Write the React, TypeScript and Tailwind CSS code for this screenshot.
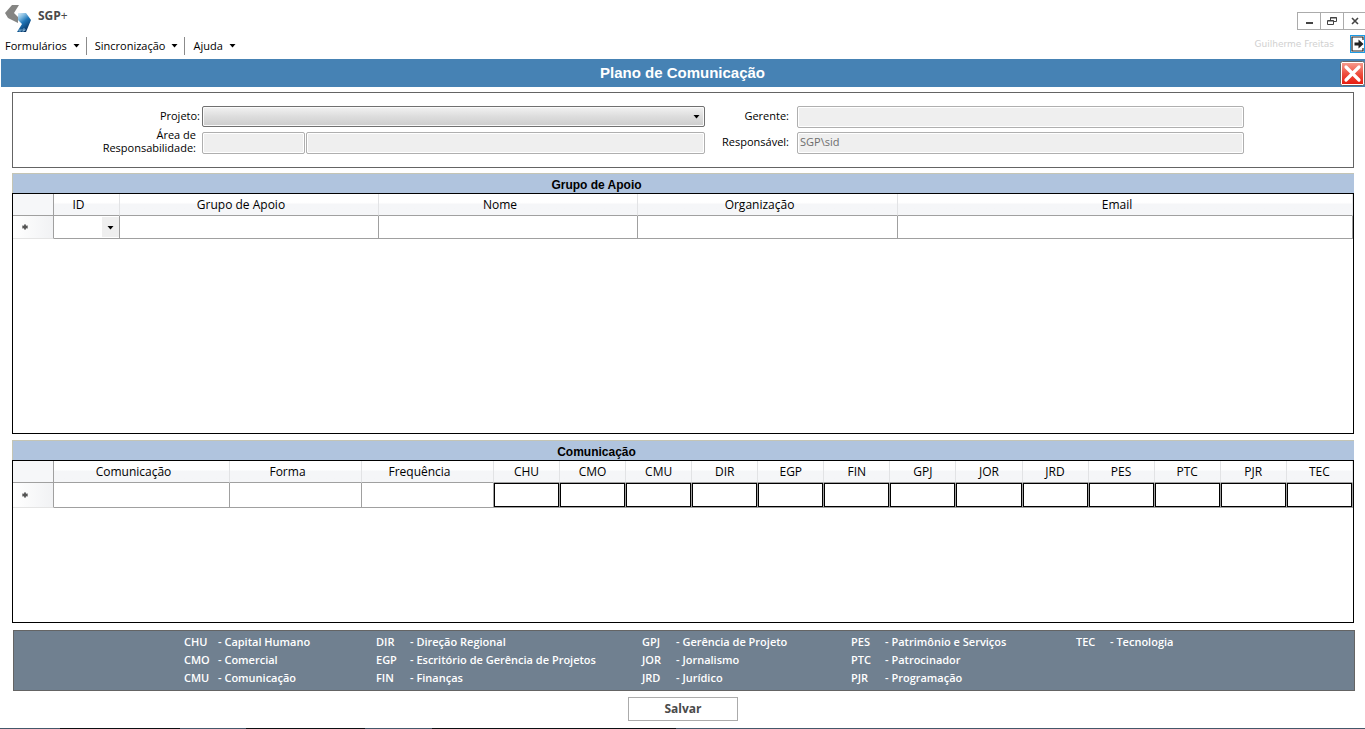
import { ReactNode } from 'react'
import { clsx } from 'clsx'

const menus = ['Formulários', 'Sincronização', 'Ajuda']

const supportColumns = [
  { label: 'Grupo de Apoio', width: 'w-[259px]' },
  { label: 'Nome', width: 'w-[259px]' },
  { label: 'Organização', width: 'w-[260px]' },
  { label: 'Email', width: '' }
]

const textColumns = [
  { label: 'Comunicação', width: 'w-44' },
  { label: 'Forma', width: 'w-33' },
  { label: 'Frequência', width: 'w-33' }
]

const areas = ['CHU', 'CMO', 'CMU', 'DIR', 'EGP', 'FIN', 'GPJ', 'JOR', 'JRD', 'PES', 'PTC', 'PJR', 'TEC']

const legend = [
  [['CHU', 'Capital Humano'], ['CMO', 'Comercial'], ['CMU', 'Comunicação']],
  [['DIR', 'Direção Regional'], ['EGP', 'Escritório de Gerência de Projetos'], ['FIN', 'Finanças']],
  [['GPJ', 'Gerência de Projeto'], ['JOR', 'Jornalismo'], ['JRD', 'Jurídico']],
  [['PES', 'Patrimônio e Serviços'], ['PTC', 'Patrocinador'], ['PJR', 'Programação']],
  [['TEC', 'Tecnologia']]
]

const fieldClass =
  'h-[22px] w-full min-w-0 rounded-[2px] border border-[#afafaf] bg-[#efefef] px-[2px] pb-[3px] text-[11px] text-[#6d6d6d] shadow-[inset_0_0_0_1px_#fff]'

function Caret({ className }: { className?: string }) {
  return (
    <svg viewBox="0 0 7 4" className={clsx('h-1 w-[7px]', className)} aria-hidden="true">
      <path d="M0.5 0h6L3.5 3.5z" fill="#000" />
    </svg>
  )
}

function Logo() {
  return (
    <svg viewBox="0 0 28 30" className="h-[30px] w-7" aria-hidden="true">
      <defs>
        <linearGradient id="logo-blue" x1="0" y1="0" x2="0.6" y2="1">
          <stop offset="0" stopColor="#e6f2fa" />
          <stop offset="0.3" stopColor="#7fb9df" />
          <stop offset="0.55" stopColor="#1f76b8" />
          <stop offset="1" stopColor="#06305f" />
        </linearGradient>
      </defs>
      <path d="M7 1h7L9 9l4 4v6L3 14 0 9z" fill="#858583" />
      <path d="M13 9h8l5 7-5 12h-9l5-8-4-4z" fill="url(#logo-blue)" />
      <path d="M14 25v2h2v-2M18 28v-3h2v1.5h-2" fill="none" stroke="#9cc8e6" strokeWidth="0.7" />
    </svg>
  )
}

function WindowButton({ label, children }: { label: string; children: ReactNode }) {
  return (
    <button
      type="button"
      aria-label={label}
      className="-ml-px flex h-[18px] w-6 items-center justify-center border border-[#ababab] bg-white"
    >
      <svg viewBox="0 0 10 9" className="h-[9px] w-[10px]" fill="none" stroke="#444" aria-hidden="true">
        {children}
      </svg>
    </button>
  )
}

function Header() {
  return (
    <header className="flex h-[59px] shrink-0 justify-between overflow-hidden">
      <div>
        <div className="flex h-9 gap-[5px] pl-[5px] pt-1">
          <Logo />
          <h1 className="pt-1 text-[12px] font-bold leading-4 text-[#4a4a4a]">
            SGP<span className="font-normal">+</span>
          </h1>
        </div>
        <nav className="flex h-5 items-center text-[11px]">
          {menus.map((menu, i) => (
            <button
              key={menu}
              type="button"
              className={clsx(
                'flex h-[18px] items-center gap-[6px] pr-[6px]',
                i === 0 ? 'pl-[5px]' : 'border-l border-[#8b8b8b] pl-2'
              )}
            >
              {menu}
              <Caret />
            </button>
          ))}
        </nav>
      </div>

      <div className="flex flex-col items-end pt-3">
        <div className="-mr-[2px] flex">
          <WindowButton label="Minimizar">
            <path d="M2 6h7" strokeWidth="2" />
          </WindowButton>
          <WindowButton label="Restaurar">
            <path d="M3.5 3V0.5h6v4H7M3 1h7M1 4h6" />
            <path d="M0.5 3.5h6v4h-6z" />
          </WindowButton>
          <WindowButton label="Fechar janela">
            <path d="M2 1l6 6M8 1L2 7" strokeWidth="1.6" />
          </WindowButton>
        </div>
        <div className="flex items-start gap-4 pt-[5px]">
          <span className="pt-[2px] font-['DejaVu_Sans'] text-[9px] leading-[14px] text-[#d0d0d0]">Guilherme Freitas</span>
          <button type="button" aria-label="Sair">
            <svg viewBox="0 0 15 18" className="h-[18px] w-[15px]" aria-hidden="true">
              <rect x="0.5" y="0.5" width="14" height="17" fill="#fff" stroke="#1c9be6" />
              <path d="M13 5V2H2v14h11v-3" fill="none" stroke="#222" strokeWidth="1.2" />
              <path d="M4.500 7.500h4V4.500l5 4.500-5 4.500v-3h-4z" fill="#222" />
            </svg>
          </button>
        </div>
      </div>
    </header>
  )
}

function TitleBar() {
  return (
    <div className="ml-px flex h-7 shrink-0 items-center bg-[#4682b4]">
      <h2 className="flex-1 pl-6 text-center font-['Liberation_Sans'] text-[15px] font-bold text-white">
        Plano de Comunicação
      </h2>
      <button type="button" aria-label="Fechar">
        <svg viewBox="0 0 25 25" className="h-[25px] w-[25px]" aria-hidden="true">
          <defs>
            <linearGradient id="close-red" x1="0" y1="0" x2="0" y2="1">
              <stop offset="0" stopColor="#f59a8c" />
              <stop offset="0.5" stopColor="#ee5040" />
              <stop offset="1" stopColor="#e81c10" />
            </linearGradient>
          </defs>
          <rect x="0.5" y="0.5" width="24" height="24" rx="2" fill="#fff" stroke="#666" />
          <rect x="2" y="2" width="21" height="21" fill="url(#close-red)" />
          <path d="M6 6l13 13M19 6L6 19" stroke="#fff" strokeWidth="3.2" strokeLinecap="round" />
        </svg>
      </button>
    </div>
  )
}

function ProjectForm() {
  return (
    <form className="grid shrink-0 grid-cols-[189px_503fr_92px_447fr_109px] gap-y-1 border border-[#646464] py-[13px] text-[11px]">
      <label htmlFor="projeto" className="self-center pb-[2px] pr-[2px] text-right">Projeto:</label>
      <div className="relative h-[21px]">
        <select
          id="projeto"
          className="h-full w-full appearance-none rounded-[2px] border border-[#707070] bg-linear-to-b from-[#f2f2f2] from-0% via-[#dddddd] via-50% to-[#cdcdcd] shadow-[inset_0_0_0_1px_#fafafa]"
        >
          <option value=""></option>
        </select>
        <Caret className="pointer-events-none absolute right-[5px] top-[9px]" />
      </div>
      <label htmlFor="gerente" className="self-center pb-[2px] pr-2 text-right">Gerente:</label>
      <input id="gerente" disabled className={fieldClass} />
      <span />

      <label htmlFor="area" className="-mt-1 pr-[6px] text-right leading-[13px]">
        Área de<br />Responsabilidade:
      </label>
      <div className="flex gap-px">
        <div className="w-[103px] shrink-0">
          <input id="area" disabled className={fieldClass} />
        </div>
        <input aria-label="Descrição da área" disabled className={fieldClass} />
      </div>
      <label htmlFor="responsavel" className="mt-[2px] pr-2 text-right">Responsável:</label>
      <input id="responsavel" disabled defaultValue="SGP\sid" className={fieldClass} />
    </form>
  )
}

interface PanelProps {
  title: string
  className: string
  children: ReactNode
}

function Panel({ title, className, children }: PanelProps) {
  return (
    <section className={clsx('flex flex-col', className)}>
      <h3 className="h-5 border-l border-t border-[#c5c5b4] bg-[#b0c4de] pr-[174px] pt-[2px] text-center font-['Liberation_Sans'] text-[12px] font-bold leading-[18px]">
        {title}
      </h3>
      <div className="flex-1 border border-black">{children}</div>
    </section>
  )
}

function HeaderCell({ children, className }: { children?: ReactNode; className?: string }) {
  return (
    <th
      scope="col"
      className={clsx(
        'h-[22px] border-b border-r border-b-[#a0a0a0] border-r-[#e2e3e5] bg-linear-to-b from-white from-40% to-[#f5f6f8] to-50% font-normal',
        className
      )}
    >
      {children}
    </th>
  )
}

const cornerCell = 'w-[41px] border-b border-r border-[#a0a0a0] bg-[#f6f7f9]'

function RowMarker() {
  return (
    <th scope="row" className="border-b border-r border-b-[#e4e4e4] border-r-[#a0a0a0] bg-linear-to-r from-white to-[#f1f2f4] p-0 pr-4">
      <svg viewBox="0 0 6 6" className="mx-auto h-[6px] w-[6px]" role="img" aria-label="Nova linha">
        <circle cx="3" cy="3" r="2" fill="#555" />
        <path d="M3 0v6M0 2l6 2M6 2L0 4" stroke="#555" />
      </svg>
    </th>
  )
}

function SupportTable() {
  return (
    <table className="w-full table-fixed border-separate border-spacing-0 text-[12px] leading-4">
      <thead>
        <tr>
          <td className={cornerCell} />
          <HeaderCell className="w-[66px] pr-4">ID</HeaderCell>
          {supportColumns.map(({ label, width }) => (
            <HeaderCell key={label} className={clsx('pr-4', width)}>{label}</HeaderCell>
          ))}
        </tr>
      </thead>
      <tbody>
        <tr>
          <RowMarker />
          <td className="relative h-[23px] border-b border-r border-[#a0a0a0] p-0">
            <select aria-label="ID" className="block h-5 w-full appearance-none bg-linear-to-l from-[#efefef] from-[17px] to-white to-[17px]">
              <option value=""></option>
            </select>
            <Caret className="pointer-events-none absolute right-[5px] top-[10px]" />
          </td>
          {supportColumns.map(({ label }) => (
            <td key={label} className="border-b border-r border-[#a0a0a0] p-0">
              <input aria-label={label} className="block h-5 w-full px-1" />
            </td>
          ))}
        </tr>
      </tbody>
    </table>
  )
}

function CommunicationTable() {
  return (
    <table className="w-full table-fixed border-separate border-spacing-0 text-[12px] leading-4">
      <thead>
        <tr>
          <td className={cornerCell} />
          {textColumns.map(({ label, width }) => (
            <HeaderCell key={label} className={clsx('pr-4', width)}>{label}</HeaderCell>
          ))}
          {areas.map((area) => (
            <HeaderCell key={area}>{area}</HeaderCell>
          ))}
        </tr>
      </thead>
      <tbody>
        <tr>
          <RowMarker />
          {textColumns.map(({ label }) => (
            <td key={label} className="border-b border-r border-[#a0a0a0] p-0">
              <input aria-label={label} className="block h-5 w-full px-1" />
            </td>
          ))}
          {areas.map((area) => (
            <td key={area} className="h-[25px] border-b border-r border-[#a0a0a0] p-0">
              <input aria-label={area} className="block h-6 w-full border border-black px-1" />
            </td>
          ))}
        </tr>
      </tbody>
    </table>
  )
}

function Legend() {
  return (
    <div className="-mr-px ml-px mt-[7px] grid shrink-0 grid-cols-[192fr_266fr_209fr_225fr_278fr] border border-[#646464] bg-[#708090] pb-[3px] pl-[170px] pt-[2px] text-[11px] font-semibold leading-[18px] text-white">
      {legend.map((column) => (
        <dl key={column[0][0]}>
          {column.map(([code, name]) => (
            <div key={code} className="flex">
              <dt className="w-[34px]">{code}</dt>
              <dd>- {name}</dd>
            </div>
          ))}
        </dl>
      ))}
    </div>
  )
}

// Sliver of the desktop taskbar under the window
function TaskbarEdge() {
  return (
    <div className="flex h-px shrink-0 bg-[#44586a] pl-[60px]">
      <span className="w-[120px] bg-[#0b1013]" />
      <span className="ml-[66px] w-[119px] bg-[#0b1013]" />
      <span className="ml-[67px] w-[244px] bg-[#0b1013]" />
    </div>
  )
}

export default function App() {
  return (
    <div className="flex min-h-screen flex-col bg-white font-['Open_Sans','Noto_Sans',sans-serif] text-black">
      <Header />
      <TitleBar />
      <main className="flex flex-1 flex-col pl-3 pr-[11px] pt-[5px]">
        <ProjectForm />
        <Panel title="Grupo de Apoio" className="mt-[5px] grow-[261] basis-0">
          <SupportTable />
        </Panel>
        <Panel title="Comunicação" className="mt-[6px] grow-[183] basis-0">
          <CommunicationTable />
        </Panel>
        <Legend />
        <button
          type="button"
          className="mb-[7px] mt-[6px] h-6 w-[110px] shrink-0 self-center border border-[#ababab] bg-white text-[12px] font-bold leading-5 text-[#4a4a4a]"
        >
          Salvar
        </button>
      </main>
      <TaskbarEdge />
    </div>
  )
}
